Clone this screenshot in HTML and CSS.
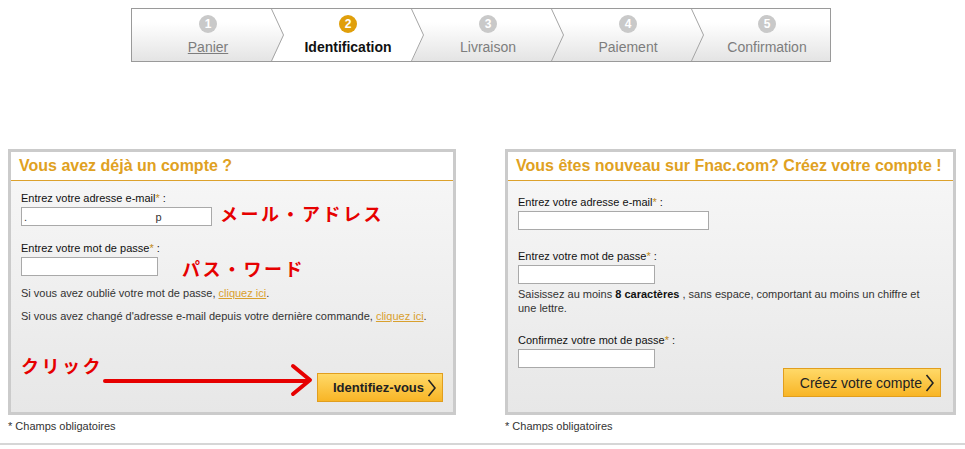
FILE: index.html
```html
<!DOCTYPE html>
<html lang="fr">
<head>
  <meta charset="UTF-8">
  <meta name="viewport" content="width=device-width, initial-scale=1.0">
  <link rel="stylesheet" href="styles.css">
  <title>Identification</title>
</head>
<body>
  <div class="steps">
    <div class="step done">
      <span class="num">1</span>
      <a href="#" class="label">Panier</a>
      <svg class="sep" width="13" height="52"><polyline points="0.5,0 12.5,26 0.5,52" fill="none" stroke="#a5a5a5"/></svg>
    </div>
    <div class="step active">
      <span class="num">2</span>
      <span class="label">Identification</span>
      <svg class="sep" width="13" height="52"><polyline points="0.5,0 12.5,26 0.5,52" fill="none" stroke="#a5a5a5"/></svg>
    </div>
    <div class="step">
      <span class="num">3</span>
      <span class="label">Livraison</span>
      <svg class="sep" width="13" height="52"><polyline points="0.5,0 12.5,26 0.5,52" fill="none" stroke="#a5a5a5"/></svg>
    </div>
    <div class="step">
      <span class="num">4</span>
      <span class="label">Paiement</span>
      <svg class="sep" width="13" height="52"><polyline points="0.5,0 12.5,26 0.5,52" fill="none" stroke="#a5a5a5"/></svg>
    </div>
    <div class="step last">
      <span class="num">5</span>
      <span class="label">Confirmation</span>
    </div>
  </div>

  <div class="accounts">
    <div class="col col-login">
      <div class="panel">
        <div class="panel-head">Vous avez déjà un compte ?</div>
        <div class="panel-body login-body">
          <label class="field-label">Entrez votre adresse e-mail<span class="req">*</span> :</label>
          <div class="field-row">
            <input type="text" class="input input-long" value=".                                          p">
            <span class="note note-mail">メール・アドレス</span>
          </div>
          <label class="field-label gap">Entrez votre mot de passe<span class="req">*</span> :</label>
          <div class="field-row">
            <input type="password" class="input input-short">
            <span class="note note-pass">パス・ワード</span>
          </div>
          <p class="info first">Si vous avez oublié votre mot de passe, <a href="#">cliquez ici</a>.</p>
          <p class="info">Si vous avez changé d'adresse e-mail depuis votre dernière commande, <a href="#">cliquez ici</a>.</p>
          <div class="login-foot">
            <div class="click-note">
              <span class="note">クリック</span>
              <svg class="arrow" width="212" height="34">
                <line x1="2" y1="18" x2="204" y2="18" stroke="#e60000" stroke-width="4" stroke-linecap="round"/>
                <polyline points="190,3 207,17 190,31" fill="none" stroke="#e60000" stroke-width="4" stroke-linecap="round" stroke-linejoin="round"/>
              </svg>
            </div>
            <a href="#" class="btn btn-login">Identifiez-vous
              <svg width="9" height="18"><polyline points="1.5,1 8,9 1.5,17" fill="none" stroke="#222" stroke-width="1.6"/></svg>
            </a>
          </div>
        </div>
      </div>
      <p class="required">* Champs obligatoires</p>
    </div>

    <div class="col col-create">
      <div class="panel">
        <div class="panel-head">Vous êtes nouveau sur Fnac.com? Créez votre compte !</div>
        <div class="panel-body create-body">
          <label class="field-label">Entrez votre adresse e-mail<span class="req">*</span> :</label>
          <input type="text" class="input input-long">
          <label class="field-label gap-big">Entrez votre mot de passe<span class="req">*</span> :</label>
          <input type="password" class="input input-short">
          <p class="hint">Saisissez au moins <span class="strong">8 caractères</span> , sans espace, comportant au moins un chiffre et une lettre.</p>
          <label class="field-label gap-hint">Confirmez votre mot de passe<span class="req">*</span> :</label>
          <input type="password" class="input input-short">
          <a href="#" class="btn btn-create">Créez votre compte
            <svg width="9" height="18"><polyline points="1.5,1 8,9 1.5,17" fill="none" stroke="#222" stroke-width="1.6"/></svg>
          </a>
        </div>
      </div>
      <p class="required">* Champs obligatoires</p>
    </div>
  </div>

  <div class="bottom-line"></div>
</body>
</html>
```

FILE: styles.css
```css
body {
  margin: 0;
  font-family: "Liberation Sans", Arial, sans-serif;
  font-size: 11px;
  color: #333;
  background: #fff;
}

/* steps bar */
.steps {
  display: flex;
  width: 698px;
  height: 52px;
  margin: 8px 0 0 131px;
  border: 1px solid #9a9a9a;
  background: linear-gradient(#fff 25%, #e4e4e4);
}

.step {
  position: relative;
  width: 140px;
  padding-left: 12px;
  box-sizing: border-box;
  display: flex;
  flex-direction: column;
  align-items: center;
}

.step.last {
  width: 138px;
}

.step.active::before {
  content: '';
  position: absolute;
  top: 0;
  bottom: 0;
  left: 0;
  width: calc(100% + 12px);
  background: #fff;
  clip-path: polygon(0 0, calc(100% - 12px) 0, 100% 50%, calc(100% - 12px) 100%, 0 100%, 12px 50%);
}

.num {
  position: relative;
  z-index: 1;
  width: 18px;
  height: 18px;
  margin-top: 6px;
  border-radius: 50%;
  background: #c9c9c9;
  color: #fff;
  font-weight: bold;
  font-size: 12px;
  line-height: 18px;
  text-align: center;
}

.active .num {
  background: #e09f0b;
}

.label {
  position: relative;
  z-index: 1;
  margin-top: 6px;
  font-size: 14px;
  line-height: 16px;
  color: #7d7d7d;
}

a.label {
  color: #7d7d7d;
  text-decoration: underline;
}

.active .label {
  color: #111;
  font-weight: bold;
}

.sep {
  position: absolute;
  top: 0;
  left: 100%;
  margin-left: -1px;
  z-index: 2;
}

/* account panels */
.accounts {
  display: flex;
  gap: 49px;
  margin: 87px 0 0 8px;
}

.col {
  display: flex;
  flex-direction: column;
}

.col-login .panel {
  width: 442px;
}

.col-create .panel {
  width: 445px;
}

.panel {
  flex: 1;
  display: flex;
  flex-direction: column;
  border: 3px solid #cbcbcb;
}

.panel-head {
  height: 28px;
  padding: 0 8px;
  background: #fff;
  border-bottom: 1px solid #dca12c;
  color: #dfa122;
  font-size: 16px;
  font-weight: bold;
  line-height: 28px;
  white-space: nowrap;
}

.panel-body {
  flex: 1;
  display: flex;
  flex-direction: column;
  align-items: flex-start;
  padding: 10px;
  background: linear-gradient(#f6f6f6, #e7e7e7);
}

.login-body {
  padding-top: 10px;
  padding-bottom: 10px;
}

.create-body {
  padding-top: 14px;
  padding-bottom: 15px;
}

.field-label {
  display: block;
  line-height: 14px;
  color: #111;
}

.req {
  color: #c08a20;
}

.gap {
  margin-top: 15px;
}

.gap-big {
  margin-top: 19px;
}

.gap-hint {
  margin-top: 18px;
}

.field-row {
  display: flex;
  align-items: flex-start;
  height: 21px;
}

.input {
  display: block;
  height: 19px;
  margin: 2px 0 0;
  padding: 0 2px;
  box-sizing: border-box;
  border: 1px solid #a9a9a9;
  background: #fff;
  font-family: "Liberation Sans", Arial, sans-serif;
  font-size: 11px;
  color: #333;
}

.input-long {
  width: 191px;
}

.input-short {
  width: 137px;
}

.note {
  color: #e60000;
  font-family: "Noto Sans CJK JP", sans-serif;
  font-weight: bold;
  font-size: 18px;
  letter-spacing: 2.5px;
  line-height: 20px;
}

.note-mail {
  margin: -2px 0 0 8px;
}

.note-pass {
  margin: 3px 0 0 24px;
}

.info {
  margin: 9px 0 0;
  line-height: 14px;
}

.info.first {
  margin-top: 10px;
}

.info a {
  color: #d9a02e;
}

.login-foot {
  margin-top: auto;
  align-self: stretch;
  display: flex;
  justify-content: space-between;
  align-items: flex-end;
}

.click-note {
  display: flex;
  flex-direction: column;
  align-items: flex-start;
}

.click-note .note {
  line-height: 22px;
}

.arrow {
  display: block;
  margin: -13px 0 5px 82px;
}

.btn {
  display: flex;
  align-items: center;
  justify-content: flex-end;
  gap: 3px;
  height: 29px;
  box-sizing: border-box;
  padding: 0 6px 0 0;
  border: 1px solid #e19e1e;
  background: linear-gradient(#ffd968, #f8b526);
  color: #222;
  font-size: 13px;
  font-weight: bold;
  text-decoration: none;
}

.btn-login {
  width: 126px;
}

.btn-create {
  width: 158px;
  margin: -1px 2px 0 0;
  align-self: flex-end;
  margin-top: auto;
  font-weight: normal;
  font-size: 14px;
}

.hint {
  width: 415px;
  margin: 3px 0 0;
  line-height: 14px;
}

.hint .strong {
  color: #111;
  font-weight: bold;
}

.required {
  margin: 4px 0 0;
  line-height: 14px;
}

.bottom-line {
  height: 2px;
  margin-top: 10px;
  background: #d6d6d6;
}
```
